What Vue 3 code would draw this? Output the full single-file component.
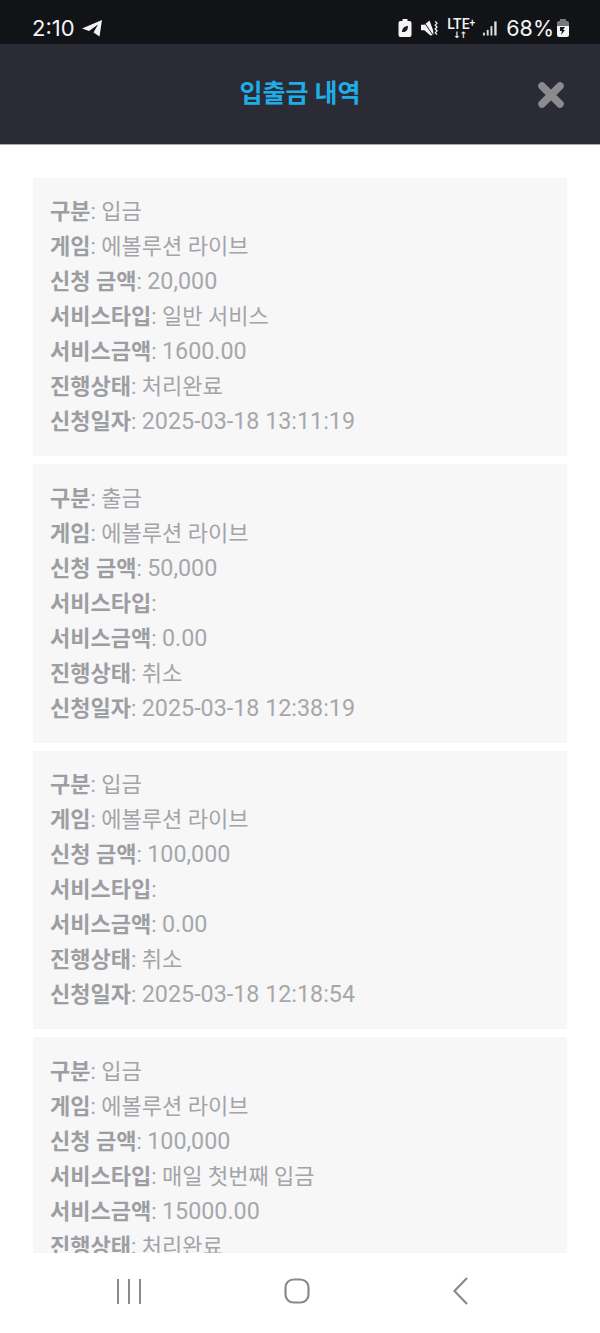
<script setup>
const cards = [
  { type: '입금', amount: '20,000', service: '일반 서비스', fee: '1600.00', status: '처리완료', date: '2025-03-18 13:11:19' },
  { type: '출금', amount: '50,000', service: '', fee: '0.00', status: '취소', date: '2025-03-18 12:38:19' },
  { type: '입금', amount: '100,000', service: '', fee: '0.00', status: '취소', date: '2025-03-18 12:18:54' },
  { type: '입금', amount: '100,000', service: '매일 첫번째 입금', fee: '15000.00', status: '처리완료', date: '2025-03-18 11:50:02' }
]
const rows = (c) => [
  { label: '구분', value: c.type },
  { label: '게임', value: '에볼루션 라이브' },
  { label: '신청 금액', value: c.amount, num: true },
  { label: '서비스타입', value: c.service },
  { label: '서비스금액', value: c.fee, num: true },
  { label: '진행상태', value: c.status },
  { label: '신청일자', value: c.date, num: true }
]
</script>

<template>
  <div class="phone">
    <div class="status">
      <div class="status-left">
        <span class="time">2:10</span>
        <svg class="tg" width="22" height="20" viewBox="0 0 22 20">
          <path d="M1 10.500 21 2 18.500 18.500 12.500 14.500 17 6.500 8 13Z" fill="#f2f2f2" />
        </svg>
      </div>
      <div class="status-right">
        <svg width="14" height="18" viewBox="0 0 13 18">
          <path d="M4 0h5v2h2a2 2 0 0 1 2 2v12a2 2 0 0 1-2 2H2a2 2 0 0 1-2-2V4a2 2 0 0 1 2-2h2Z" fill="#f4f4f4" />
          <path d="M3.500 13c0-4 3-6 6-6 0 4-2 6.500-6 6Z" fill="#1a1b1f" />
        </svg>
        <svg class="mute" width="17" height="18" viewBox="0 0 18 18">
          <path d="M0 5.500h3.500L9 1l4 11v4.500L10 17 3.500 11.500H0Z" fill="#f4f4f4" />
          <path d="M2 1 13 17" stroke="#14151a" stroke-width="1" />
          <path d="M15 2l2 2-2 2 2 2-2 2 2 2-2 2 2 2" fill="none" stroke="#f4f4f4" stroke-width="1.300" />
        </svg>
        <div class="lte">
          <span class="lte-text">LTE<sup>+</sup></span>
          <span class="lte-arrows">↓↑</span>
        </div>
        <svg class="signal" width="15" height="16" viewBox="0 0 16 16">
          <rect x="0" y="13" width="2" height="3" fill="#ddd" />
          <rect x="4" y="10" width="2" height="6" fill="#ddd" />
          <rect x="8" y="6" width="2" height="10" fill="#ddd" />
          <rect x="12" y="1" width="2.500" height="15" fill="#ddd" />
        </svg>
        <span class="pct">68%</span>
        <svg class="batt" width="12" height="18" viewBox="0 0 12 18">
          <path d="M3 0h6v2h1a2 2 0 0 1 2 2v3H0V4a2 2 0 0 1 2-2h1Z" fill="#77787c" />
          <path d="M0 7h12v9a2 2 0 0 1-2 2H2a2 2 0 0 1-2-2Z" fill="#f4f4f4" />
          <path d="M3 8h5l-2 3h2l-4 5 1-4H3Z" fill="#17181c" />
        </svg>
      </div>
    </div>

    <header class="head">
      <h1 class="title">입출금 내역</h1>
      <button class="close" aria-label="닫기">
        <svg width="28" height="28" viewBox="0 0 28 28">
          <path d="M5 5 23 23M23 5 5 23" stroke="#8b8b8d" stroke-width="7.500" stroke-linecap="round" />
        </svg>
      </button>
    </header>

    <main class="list">
      <section v-for="(c, i) in cards" :key="i" class="card">
        <p v-for="r in rows(c)" :key="r.label" class="row"><b>{{ r.label }}</b>: <span :class="{ num: r.num }">{{ r.value }}</span></p>
      </section>
    </main>

    <nav class="nav">
      <svg width="26" height="26" viewBox="0 0 26 26">
        <path d="M2 1v25M13 1v25M24 1v25" stroke="#8a8a8a" stroke-width="2" fill="none" />
      </svg>
      <svg width="26" height="26" viewBox="0 0 26 26">
        <rect x="1.500" y="1.500" width="23" height="23" rx="8" stroke="#8a8a8a" stroke-width="2.200" fill="none" />
      </svg>
      <svg width="18" height="28" viewBox="0 0 18 28">
        <path d="M15 1 2.500 14 15 27" stroke="#8a8a8a" stroke-width="2.200" fill="none" />
      </svg>
    </nav>
  </div>
</template>

<style>
body { margin: 0; background: #fff; }
</style>

<style scoped>
.phone {
  width: 600px;
  height: 1333px;
  display: flex;
  flex-direction: column;
  overflow: hidden;
  background: #fff;
  font-family: Roboto, "Noto Sans CJK KR", sans-serif;
}
.status {
  height: 44px;
  flex: none;
  background: #121317;
  display: flex;
  align-items: center;
  justify-content: space-between;
  padding: 12px 31px 0 32px;
  box-sizing: border-box;
  color: #f4f4f4;
}
.status-left, .status-right { display: flex; align-items: center; }
.time { font-family: Inter, sans-serif; font-size: 22px; line-height: 24px; }
.tg { margin-left: 6px; }
.mute { margin-left: 9px; }
.lte { margin-left: 9px; width: 30px; display: flex; flex-direction: column; align-items: flex-start; }
.lte-text { font-size: 14px; line-height: 13px; font-weight: 500; }
.lte-text sup { font-size: 10px; line-height: 0; vertical-align: 3px; }
.lte-arrows { font-size: 9px; line-height: 8px; margin-left: 6px; font-weight: 700; font-family: "DejaVu Sans", sans-serif; letter-spacing: -1px; }
.signal { margin-left: 6px; }
.pct { font-family: Inter, sans-serif; font-size: 21.500px; line-height: 24px; margin-left: 8px; }
.batt { margin-left: 3px; }
.head {
  height: 101px;
  flex: none;
  box-sizing: border-box;
  background: #2b2b35;
  border-bottom: 1px solid #a9a9ac;
  position: relative;
  display: flex;
  align-items: center;
  justify-content: center;
}
.title {
  margin: 0;
  color: #1fade9;
  font-size: 25px;
  font-weight: 700;
  line-height: 30px;
}
.close {
  position: absolute;
  right: 35px;
  top: 37px;
  padding: 0;
  border: 0;
  background: none;
  display: flex;
}
.list {
  flex: 1;
  min-height: 0;
  overflow: hidden;
  padding: 32.700px 33px 0;
}
.card {
  background: #f7f7f8;
  padding: 16.400px 17px 17.100px;
  margin-bottom: 8px;
}
.row {
  margin: 0;
  font-size: 22px;
  line-height: 35px;
  height: 35px;
  color: #a3a4a8;
  white-space: pre-wrap;
}
.row b { font-weight: 700; color: #9d9ea3; }
.num { font-size: 23.300px; line-height: 0; color: #a6a7ab; }
.nav {
  height: 80px;
  flex: none;
  background: #fff;
  display: flex;
  align-items: center;
  justify-content: space-between;
  padding: 0 130px 4px 116px;
  box-sizing: border-box;
}
</style>
